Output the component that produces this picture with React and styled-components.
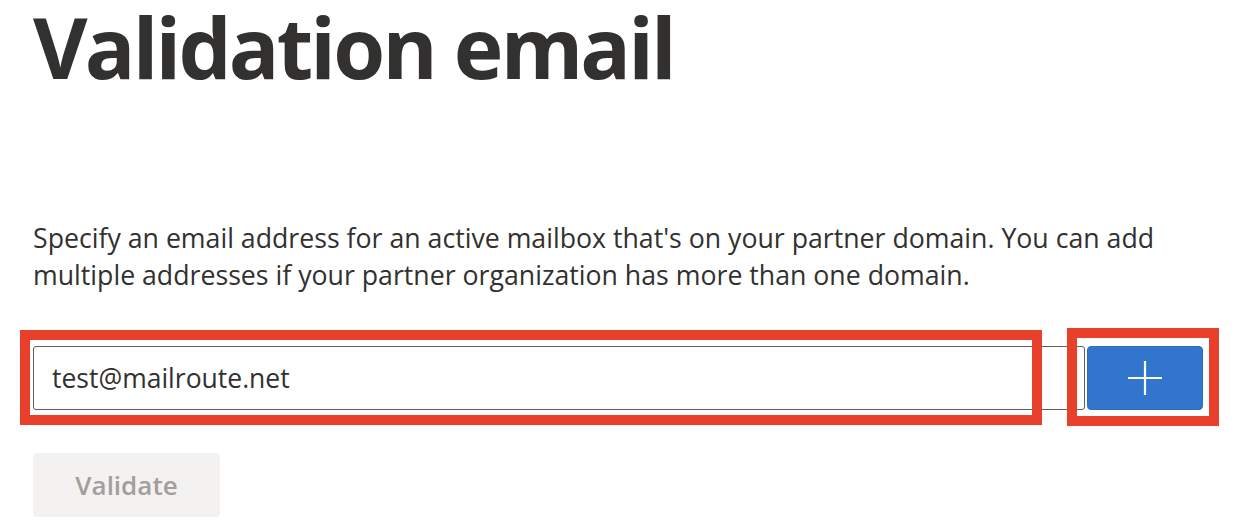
import React from "react";
import styled, { createGlobalStyle } from "styled-components";

const Global = createGlobalStyle`
  html, body { margin: 0; padding: 0; background: #ffffff; }
  body { font-family: "Open Sans", "Noto Sans", "Liberation Sans", sans-serif; color: #323130; }
  * { box-sizing: border-box; }
`;

const Page = styled.div`
  width: 1240px;
  height: 530px;
  overflow: hidden;
  padding: 0 33px;
  display: flex;
  flex-direction: column;
`;

const Title = styled.h1`
  margin: 0;
  font-size: 84px;
  line-height: 93px;
  font-weight: 700;
  letter-spacing: -2.8px;
  color: #323130;
  white-space: nowrap;
`;

const Description = styled.p`
  margin: 126px 0 0;
  font-size: 26.7px;
  line-height: 37px;
  color: #323130;
  max-width: 1150px;
`;

const Row = styled.div`
  margin-top: 53px;
  display: flex;
  gap: 2px;
`;

const Field = styled.div`
  position: relative;
  width: 1052px;
  height: 64px;
`;

const Input = styled.input`
  width: 100%;
  height: 100%;
  border: 1px solid #605e5c;
  border-radius: 3px;
  padding: 0 18px;
  font-family: inherit;
  font-size: 26.5px;
  color: #323130;
  background: #fff;
  outline: none;
`;

const AddButton = styled.button`
  position: relative;
  width: 116px;
  height: 64px;
  border: 1px solid #2b6fc7;
  border-radius: 4px;
  background: #3275cd;
  display: flex;
  align-items: center;
  justify-content: center;
  padding: 0;
  cursor: pointer;
`;

const Highlight = styled.div`
  position: absolute;
  left: ${(p) => p.$left}px;
  top: ${(p) => p.$top}px;
  width: ${(p) => p.$width}px;
  height: ${(p) => p.$height}px;
  border: 10px solid #e8402a;
  pointer-events: none;
`;

const ValidateButton = styled.button`
  margin-top: 43px;
  width: 187px;
  height: 64px;
  border: none;
  border-radius: 4px;
  background: #f3f2f1;
  color: #a19f9d;
  font-family: inherit;
  font-size: 26px;
  font-weight: 600;
  padding: 0;
  align-self: flex-start;
`;

const Plus = () => (
  <svg width="34" height="34" viewBox="0 0 34 34" aria-hidden="true">
    <path d="M17 0 V34 M0 17 H34" stroke="#ffffff" strokeWidth="2.2" fill="none" />
  </svg>
);

export default function App() {
  return (
    <>
      <Global />
      <Page>
        <Title>Validation email</Title>
        <Description>
          Specify an email address for an active mailbox that's on your partner domain. You can add
          multiple addresses if your partner organization has more than one domain.
        </Description>
        <Row>
          <Field>
            <Input defaultValue="test@mailroute.net" />
            <Highlight $left={-13} $top={-16} $width={1022} $height={95} />
          </Field>
          <AddButton aria-label="Add">
            <Plus />
            <Highlight $left={-21} $top={-19} $width={152} $height={98} />
          </AddButton>
        </Row>
        <ValidateButton disabled>Validate</ValidateButton>
      </Page>
    </>
  );
}
